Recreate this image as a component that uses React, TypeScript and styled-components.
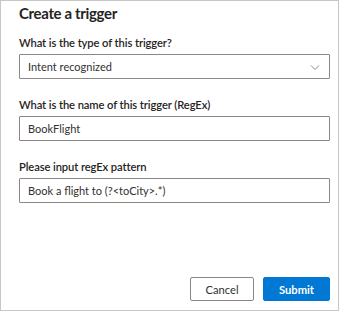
import React from "react";
import styled, { createGlobalStyle } from "styled-components";

const Global = createGlobalStyle`
  html, body { margin: 0; padding: 0; background: #ffffff; }
  body { font-family: Lato, "Open Sans", sans-serif; }
  * { box-sizing: border-box; }
`;

const Frame = styled.div`
  width: 339px;
  height: 311px;
  border: 1px solid #c8c6c4;
  background: #ffffff;
  padding: 2px 8px 9px 18px;
  display: flex;
  flex-direction: column;
`;

const Title = styled.h1`
  margin: 0;
  height: 21px;
  font-size: 15px;
  line-height: 21px;
  font-weight: 700;
  letter-spacing: -0.35px;
  color: #252423;
`;

const Form = styled.div`
  display: flex;
  flex-direction: column;
  gap: 18px;
  margin-top: 11px;
  flex: 1;
`;

const Field = styled.div`
  display: flex;
  flex-direction: column;
  gap: 3px;
`;

const Label = styled.label`
  font-size: 11.2px;
  line-height: 16px;
  font-weight: 600;
  letter-spacing: -0.1px;
  color: #252423;
  white-space: nowrap;
`;

const Box = styled.div`
  height: 25px;
  border: 1px solid #8a8886;
  border-radius: 1px;
  display: flex;
  align-items: center;
  padding: 0 8px;
  font-size: 11px;
  color: #323130;
  background: #fff;
`;

const Value = styled.span`
  flex: 1;
  white-space: nowrap;
`;

const Footer = styled.div`
  display: flex;
  justify-content: flex-end;
  gap: 9px;
`;

const Button = styled.button<{ $primary?: boolean }>`
  height: 24px;
  min-width: ${(p) => (p.$primary ? "67px" : "64px")};
  padding: 0 12px;
  border-radius: 2px;
  font-family: Lato, "Open Sans", sans-serif;
  font-size: 11.2px;
  cursor: pointer;
  border: 1px solid ${(p) => (p.$primary ? "#0078d4" : "#8a8886")};
  background: ${(p) => (p.$primary ? "#0078d4" : "#ffffff")};
  color: ${(p) => (p.$primary ? "#ffffff" : "#323130")};
  font-weight: ${(p) => (p.$primary ? 700 : 400)};
`;

const Chevron = () => (
  <svg width="12" height="12" viewBox="0 0 12 12" fill="none">
    <path d="M2 4.5 L6 8.5 L10 4.5" stroke="#8a8886" strokeWidth="1" />
  </svg>
);

export default function App() {
  return (
    <>
      <Global />
      <Frame>
        <Title>Create a trigger</Title>
        <Form>
          <Field>
            <Label>What is the type of this trigger?</Label>
            <Box>
              <Value>Intent recognized</Value>
              <Chevron />
            </Box>
          </Field>
          <Field>
            <Label>What is the name of this trigger (RegEx)</Label>
            <Box>
              <Value>BookFlight</Value>
            </Box>
          </Field>
          <Field>
            <Label>Please input regEx pattern</Label>
            <Box>
              <Value>Book a flight to (?&lt;toCity&gt;.*)</Value>
            </Box>
          </Field>
        </Form>
        <Footer>
          <Button>Cancel</Button>
          <Button $primary>Submit</Button>
        </Footer>
      </Frame>
    </>
  );
}
